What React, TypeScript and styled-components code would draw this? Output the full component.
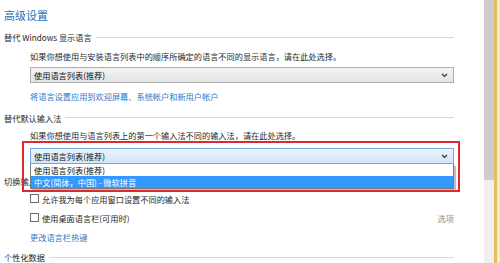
import React from 'react';
import styled, { createGlobalStyle } from 'styled-components';

const GlobalStyle = createGlobalStyle`
  html, body {
    margin: 0;
    padding: 0;
    background: #ffffff;
    overflow: hidden;
  }
  body {
    font-family: "Noto Sans CJK SC", "Noto Sans", sans-serif;
    font-size: 8.2px;
    color: #1e1e1e;
  }
`;

const Window = styled.div`
  display: flex;
  width: 500px;
  height: 263px;
  overflow: hidden;
`;

const Content = styled.div`
  flex: 1;
  display: flex;
  flex-direction: column;
  padding: 0 30px 0 4px;
`;

const Title = styled.div`
  font-size: 11px;
  line-height: 14px;
  color: #2b6fc0;
  margin-top: 8px;
`;

const SectionHeader = styled.div<{ $mt: number }>`
  display: flex;
  align-items: center;
  height: 12px;
  line-height: 12px;
  margin-top: ${(p) => p.$mt}px;
  white-space: nowrap;

  &::after {
    content: '';
    flex: 1;
    height: 1px;
    margin-left: 4px;
    background: #d9d9d9;
  }
`;

const Indent = styled.div<{ $mt: number }>`
  padding-left: 26px;
  margin-top: ${(p) => p.$mt}px;
  line-height: 12px;
  white-space: nowrap;
`;

const Description = styled.div`
  color: #2a2a2a;
`;

const Link = styled.div`
  color: #2f78c8;
`;

const SelectWrap = styled.div`
  position: relative;
`;

const Select = styled.div<{ $focused?: boolean }>`
  display: flex;
  align-items: center;
  justify-content: space-between;
  height: 14px;
  padding: 0 5px 0 3px;
  border: 1px solid ${(p) => (p.$focused ? '#6fa8e4' : '#adadad')};
  background: ${(p) =>
    p.$focused
      ? 'linear-gradient(#edf5fd, #d2e6fa)'
      : 'linear-gradient(#f3f3f3, #e4e4e4)'};
  color: #111;
`;

const Chevron = styled.svg`
  width: 7px;
  height: 5px;
`;

const Annotation = styled.div`
  position: absolute;
  top: -7px;
  left: -8px;
  width: 434px;
  height: 47px;
  border: 2px solid #dc2a30;
  pointer-events: none;
  z-index: 3;
`;

const DropList = styled.div`
  position: absolute;
  top: 100%;
  left: 0;
  right: 0;
  border: 1px solid #7a7a7a;
  border-top: none;
  background: #ffffff;
  box-shadow: 2px 2px 1px rgba(0, 0, 0, 0.25);
  z-index: 2;
`;

const DropItem = styled.div<{ $active?: boolean }>`
  height: 12px;
  line-height: 12px;
  padding-left: 3px;
  background: ${(p) => (p.$active ? '#3399ff' : '#ffffff')};
  color: ${(p) => (p.$active ? '#ffffff' : '#111')};
`;

const CheckRow = styled(Indent)`
  display: flex;
  align-items: center;
  justify-content: space-between;
`;

const CheckLabel = styled.label`
  display: flex;
  align-items: center;
  gap: 3px;
`;

const Box = styled.span`
  width: 7px;
  height: 7px;
  border: 1px solid #6e6e6e;
  background: #ffffff;
`;

const Options = styled.span`
  color: #8c8c8c;
`;

const Scrollbar = styled.div`
  width: 10px;
  display: flex;
  flex-direction: column;
  background: #f0f0f0;
`;

const Thumb = styled.div`
  height: 180px;
  background: #cdcdcd;
`;

const Frame = styled.div`
  width: 6px;
  border-left: 3px solid #e6bd5c;
  box-sizing: border-box;
  background: #f7ebcc;
`;

const ChevronIcon = () => (
  <Chevron viewBox="0 0 7 5">
    <path d="M1 1 L3.5 3.5 L6 1" fill="none" stroke="#333" strokeWidth="1.2" />
  </Chevron>
);

export default function App() {
  return (
    <>
      <GlobalStyle />
      <Window>
        <Content>
          <Title>高级设置</Title>

          <SectionHeader $mt={9}>替代 Windows 显示语言</SectionHeader>
          <Indent $mt={6.5}>
            <Description>
              如果你想使用与安装语言列表中的顺序所确定的语言不同的显示语言，请在此处选择。
            </Description>
          </Indent>
          <Indent $mt={5.5}>
            <Select>
              <span>使用语言列表(推荐)</span>
              <ChevronIcon />
            </Select>
          </Indent>
          <Indent $mt={7}>
            <Link>将语言设置应用到欢迎屏幕、系统帐户和新用户帐户</Link>
          </Indent>

          <SectionHeader $mt={9.5}>替代默认输入法</SectionHeader>
          <Indent $mt={5}>
            <Description>
              如果你想使用与语言列表上的第一个输入法不同的输入法，请在此处选择。
            </Description>
          </Indent>
          <Indent $mt={7.5}>
            <SelectWrap>
              <Select $focused>
                <span>使用语言列表(推荐)</span>
                <ChevronIcon />
              </Select>
              <DropList>
                <DropItem>使用语言列表(推荐)</DropItem>
                <DropItem $active>中文(简体，中国) - 微软拼音</DropItem>
              </DropList>
              <Annotation />
            </SelectWrap>
          </Indent>

          <SectionHeader $mt={11}>切换输入法</SectionHeader>
          <CheckRow $mt={5.5}>
            <CheckLabel>
              <Box />
              允许我为每个应用窗口设置不同的输入法
            </CheckLabel>
          </CheckRow>
          <CheckRow $mt={7}>
            <CheckLabel>
              <Box />
              使用桌面语言栏(可用时)
            </CheckLabel>
            <Options>选项</Options>
          </CheckRow>
          <Indent $mt={7}>
            <Link>更改语言栏热键</Link>
          </Indent>

          <SectionHeader $mt={8.5}>个性化数据</SectionHeader>
        </Content>
        <Scrollbar>
          <Thumb />
        </Scrollbar>
        <Frame />
      </Window>
    </>
  );
}
